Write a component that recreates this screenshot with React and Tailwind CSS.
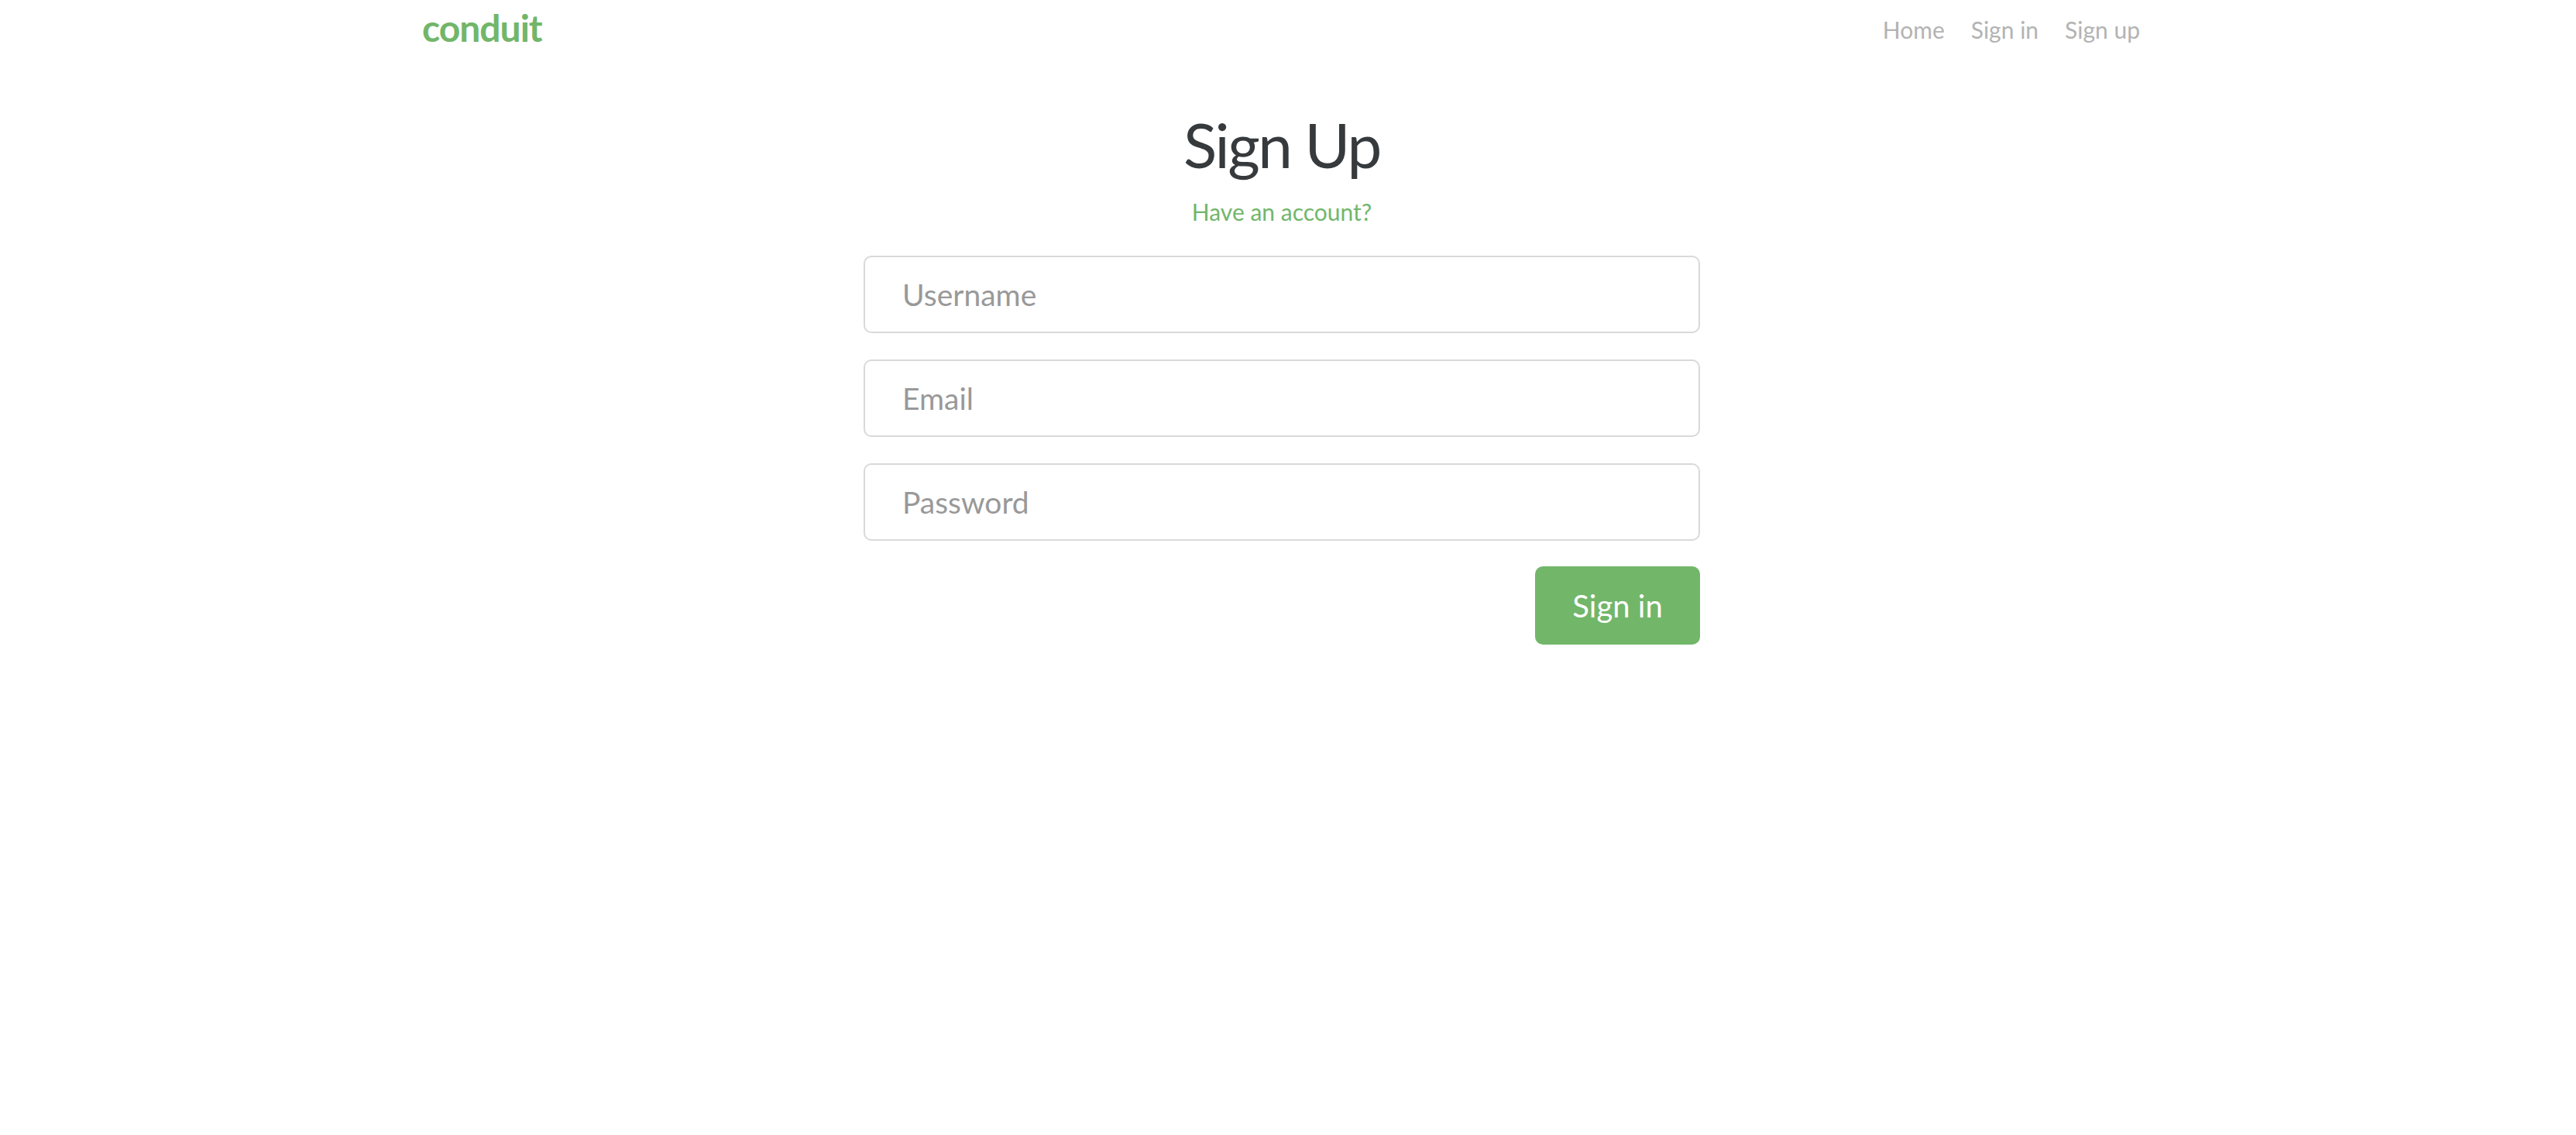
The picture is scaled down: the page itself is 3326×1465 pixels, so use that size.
import React from 'react';

const FONT = { fontFamily: 'Lato, "Open Sans", sans-serif' };

// ── 入力欄 ──────────────────
function Field({ placeholder, type = 'text', last }) {
  return (
    <div className={last ? 'mb-[33px]' : 'mb-[34px]'}>
      <input
        type={type}
        placeholder={placeholder}
        className="block w-full h-[100px] px-[48px] rounded-[10px] border-2 border-[#d9d9d9] bg-white text-[39px] text-[#55595c] placeholder:text-[#999999] outline-none"
      />
    </div>
  );
}

export default function App() {
  return (
    <div className="min-h-screen bg-white pr-[16px]" style={FONT}>
      {/* ── ナビ ── */}
      <nav className="mx-auto w-[2280px] px-[30px] h-[70px] flex items-center justify-between">
        <a href="#" className="text-[48px] font-bold leading-[70px] tracking-[-1px] text-[#72b66a] pt-[2px]">
          conduit
        </a>
        <ul className="flex items-center gap-[34px] pt-[5px] text-[30px] leading-[70px] text-[#b3b3b3]">
          <li>Home</li>
          <li>Sign in</li>
          <li className="pr-[2px]">Sign up</li>
        </ul>
      </nav>

      {/* ── 本体 ── */}
      <div className="mx-auto w-[2280px] px-[30px] pt-[68px]">
        <div className="mx-auto w-[1080px]">
          <h1 className="text-center text-[80px] font-normal leading-[96px] tracking-[-2.5px] text-[#373a3c] mb-[15px]">
            Sign Up
          </h1>
          <p className="text-center text-[30px] leading-[48px] text-[#72b66a] mb-[33px]">
            Have an account?
          </p>
          <form onSubmit={e => e.preventDefault()}>
            <Field placeholder="Username" />
            <Field placeholder="Email" />
            <Field placeholder="Password" type="password" last />
            <div className="flex justify-end">
              <button
                type="submit"
                className="w-[213px] h-[101px] rounded-[10px] bg-[#72b66a] text-white text-[40px]"
              >
                Sign in
              </button>
            </div>
          </form>
        </div>
      </div>
    </div>
  );
}
